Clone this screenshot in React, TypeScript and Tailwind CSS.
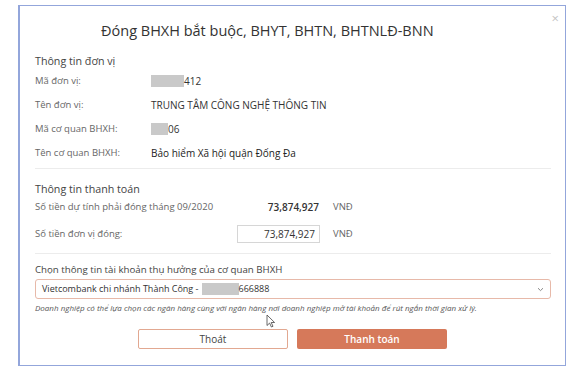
import React from "react";

const unitRows = [
  { label: "Mã đơn vị:", value: "412", mask: "w-[33px]" },
  { label: "Tên đơn vị:", value: "TRUNG TÂM CÔNG NGHỆ THÔNG TIN" },
  { label: "Mã cơ quan BHXH:", value: "06", mask: "w-[17px]" },
  { label: "Tên cơ quan BHXH:", value: "Bảo hiểm Xã hội quận Đống Đa", strong: true },
];

function Mask({ className }: { className: string }) {
  return <span className={`inline-block h-[12px] bg-[#c9c9c9] ${className}`} />;
}

export default function App() {
  return (
    <div
      className="h-[374px] w-[576px] bg-white pl-[18px] pt-[5px]"
      style={{ fontFamily: '"Open Sans", "Noto Sans", sans-serif' }}
    >
      <div className="relative flex h-[361px] w-[548px] flex-col border border-l-2 border-[#93a6db] bg-white pl-[15px] pr-[14px]">
        <span className="absolute right-[6px] top-[6px] text-[13px] leading-none text-[#c4c4c4]">×</span>

        <h1 className="mt-[15px] pl-[66px] text-[14.5px] leading-[20px] text-[#333]">
          Đóng BHXH bắt buộc, BHYT, BHTN, BHTNLĐ-BNN
        </h1>

        <p className="mt-[12px] text-[10.7px] leading-[16px] text-[#444]">Thông tin đơn vị</p>
        <div className="flex flex-col">
          {unitRows.map((row) => (
            <div key={row.label} className="flex h-[24px] items-center text-[10px]">
              <span className="w-[116px] text-[9.5px] text-[#666]">{row.label}</span>
              <span className={`flex items-center ${row.strong ? "text-[#222]" : "text-[#333]"}`}>
                {row.mask && <Mask className={row.mask} />}
                {row.value}
              </span>
            </div>
          ))}
        </div>

        <div className="mt-[3px] h-px bg-[#ececec]" />

        <p className="mt-[12px] text-[10.7px] leading-[16px] text-[#444]">Thông tin thanh toán</p>
        <div className="flex h-[21px] items-center text-[10px]">
          <span className="w-[202px] text-[9.5px] text-[#666]">Số tiền dự tính phải đóng tháng 09/2020</span>
          <span className="w-[83px] pr-[1px] text-right font-semibold text-[#333]">73,874,927</span>
          <span className="ml-[13px] text-[9.5px] text-[#666]">VNĐ</span>
        </div>
        <div className="mt-[1px] flex h-[30px] items-center text-[10px]">
          <span className="w-[202px] text-[9.5px] text-[#666]">Số tiền đơn vị đóng:</span>
          <span className="flex h-[18px] w-[83px] items-center justify-end border border-[#d6d6d6] pr-[4px] text-[#333]">
            73,874,927
          </span>
          <span className="ml-[13px] text-[9.5px] text-[#666]">VNĐ</span>
        </div>

        <div className="mt-[4px] h-px bg-[#ececec]" />

        <p className="mt-[8px] text-[9.7px] leading-[16px] text-[#444]">
          Chọn thông tin tài khoản thụ hưởng của cơ quan BHXH
        </p>
        <div className="mt-[1px] flex h-[20px] items-center justify-between rounded-[3px] border border-[#e7b9a9] pl-[6px] pr-[6px] text-[9px] text-[#333]">
          <span className="flex items-center">
            Vietcombank chi nhánh Thành Công -<Mask className="ml-[3px] w-[37px]" />666888
          </span>
          <svg width="7" height="5" viewBox="0 0 7 5" fill="none">
            <path d="M1 1.2 3.5 3.6 6 1.2" stroke="#888" strokeWidth="1" />
          </svg>
        </div>
        <p className="mt-[3px] text-[8px] italic leading-[12px] text-[#555]">
          Doanh nghiệp có thể lựa chọn các ngân hàng cùng với ngân hàng nơi doanh nghiệp mở tài khoản để rút ngắn thời gian xử lý.
        </p>

        <div className="relative mt-[15px] flex justify-center gap-[9px] pr-[1px]">
          <button className="h-[20px] w-[150px] rounded-[2px] border border-[#e2a891] bg-white text-[10px] text-[#444]">
            Thoát
          </button>
          <button className="h-[20px] w-[150px] rounded-[2px] bg-[#d6795a] text-[10px] font-semibold text-white">
            Thanh toán
          </button>
          <svg
            className="absolute left-[231px] top-[-15px]"
            width="10"
            height="14"
            viewBox="0 0 10 14"
          >
            <path d="M1 1v10.5l2.6-2.4 1.8 3.9 1.6-.7-1.8-3.8h3.4z" fill="#fff" stroke="#444" strokeWidth="0.8" />
          </svg>
        </div>
      </div>
    </div>
  );
}
